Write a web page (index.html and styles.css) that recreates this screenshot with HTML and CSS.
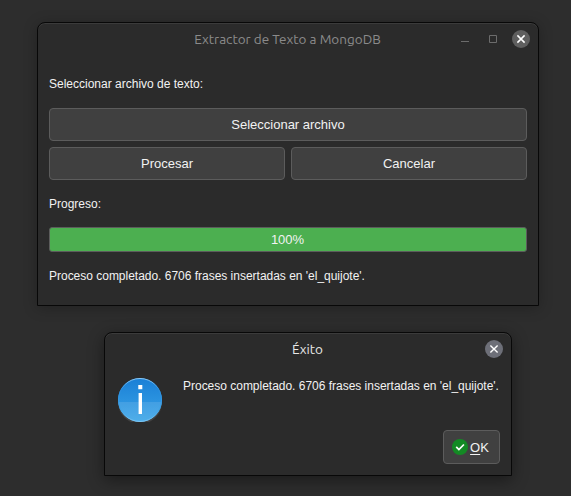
FILE: index.html
```html
<!DOCTYPE html>
<html lang="es">
<head>
<meta charset="utf-8">
<title>Extractor de Texto a MongoDB</title>
<link rel="stylesheet" href="styles.css">
</head>
<body>
<main class="window main-window">
  <header class="titlebar inactive">
    <h1 class="title main-title">Extractor de Texto a MongoDB</h1>
    <div class="controls">
      <svg class="ctl" viewBox="0 0 18 18"><path d="M5 11.5h8" stroke="#6c6c6c" fill="none"/></svg>
      <svg class="ctl" viewBox="0 0 18 18"><path d="M5.5 5.5h7v7h-7z" stroke="#6c6c6c" fill="none"/></svg>
      <svg class="ctl" viewBox="0 0 18 18"><circle cx="9" cy="9" r="9" fill="#5f5f5f"/><path d="M5.4 5.4l7.2 7.2M12.6 5.4l-7.2 7.2" stroke="#fff" stroke-width="1.5" fill="none"/></svg>
    </div>
  </header>
  <section class="content">
    <p class="label">Seleccionar archivo de texto:</p>
    <button class="btn">Seleccionar archivo</button>
    <div class="row">
      <button class="btn">Procesar</button>
      <button class="btn">Cancelar</button>
    </div>
    <p class="label">Progreso:</p>
    <div class="progress">100%</div>
    <p class="label status">Proceso completado. 6706 frases insertadas en 'el_quijote'.</p>
  </section>
</main>
<section class="window dialog">
  <header class="titlebar">
    <h2 class="title dialog-title">Éxito</h2>
    <div class="controls">
      <svg class="ctl" viewBox="0 0 18 18"><circle cx="9" cy="9" r="9" fill="#6d6f78"/><path d="M5.4 5.4l7.2 7.2M12.6 5.4l-7.2 7.2" stroke="#fff" stroke-width="1.4" fill="none"/></svg>
    </div>
  </header>
  <div class="message">
    <svg class="info" viewBox="0 0 44 44">
      <defs>
        <linearGradient id="blue" x1="0" y1="0" x2="0" y2="1"><stop offset="0" stop-color="#1a7fd6"/><stop offset="1" stop-color="#3aa5e8"/></linearGradient>
        <linearGradient id="rim" x1="0" y1="0" x2="0" y2="1"><stop offset="0" stop-color="#8cc8f2"/><stop offset=".25" stop-color="#2b8ddd"/><stop offset=".75" stop-color="#3fa3e6"/><stop offset="1" stop-color="#7cc6f4"/></linearGradient>
      </defs>
      <circle cx="22" cy="22" r="22" fill="url(#blue)"/>
      <path d="M0 24h44a22 22 0 0 1-44 0z" fill="#fff" fill-opacity=".11"/>
      <circle cx="22" cy="22" r="21.5" fill="none" stroke="url(#rim)"/>
      <path d="M20.3 7h4v4.3h-4zM20.6 15h3.4v21h-3.4z" fill="#fff"/>
    </svg>
    <p class="message-text status">Proceso completado. 6706 frases insertadas en 'el_quijote'.</p>
  </div>
  <footer class="actions">
    <button class="btn ok"><svg class="check" viewBox="0 0 16 16"><circle cx="8" cy="8" r="8" fill="#138a24"/><path d="M4.2 7.8l2.7 2.7 5-5" stroke="#fff" stroke-width="1.7" fill="none"/></svg><span><u>O</u>K</span></button>
  </footer>
</section>
</body>
</html>
```
FILE: styles.css
```css
* {
  box-sizing: border-box;
}

body {
  margin: 0;
  height: 496px;
  padding: 22px 0 0 37px;
  overflow: hidden;
  background: #2d2d2d;
  color: #f2f2f2;
  font-family: "Liberation Sans", Arial, sans-serif;
  font-size: 12px;
}

.window {
  display: flex;
  flex-direction: column;
  border: 1px solid #080808;
  border-radius: 8px 8px 0 0;
  background: #2b2b2b;
}

.main-window {
  width: 502px;
  height: 284px;
  box-shadow: inset 0 1px #3b3b3b, 0 2px 14px rgba(0, 0, 0, 0.25);
}

.dialog {
  width: 408px;
  height: 144px;
  margin: 26px 0 0 67px;
  box-shadow: inset 0 1px #3b3b3b, 0 4px 16px rgba(0, 0, 0, 0.42);
}

.titlebar {
  display: grid;
  grid-template-columns: 1fr auto 1fr;
  align-items: center;
  height: 32px;
  padding: 0 8px;
}

.title {
  grid-column: 2;
  margin: 0 1px 0 0;
  color: #e8e8e8;
  font: 400 13.5px/18px Ubuntu, "Noto Sans", sans-serif;
}

.inactive .title {
  color: #8b8b8b;
}

.controls {
  display: flex;
  justify-content: flex-end;
  gap: 10px;
}

.ctl {
  width: 18px;
  height: 18px;
}

.content {
  display: flex;
  flex-direction: column;
  padding: 17px 11px 0;
}

.label {
  margin: 0;
  height: 24px;
  line-height: 24px;
}

.status {
  letter-spacing: -0.015px;
}

.btn {
  display: flex;
  flex: 1;
  align-items: center;
  justify-content: center;
  min-height: 33px;
  padding: 0;
  border: 1px solid #5c5c5c;
  border-radius: 4px;
  background: #404040;
  color: #f2f2f2;
  font: 13px/15px "Liberation Sans", Arial, sans-serif;
}

.content > .btn {
  flex: none;
  margin-top: 12px;
}

.row {
  display: flex;
  gap: 6px;
  margin: 6px 0 12px;
}

.progress {
  height: 25px;
  margin: 11px 0 12px;
  padding-right: 1px;
  border: 1px solid #5c5c5c;
  border-radius: 3px;
  background: #4caf50;
  font-size: 13px;
  line-height: 24px;
  text-align: center;
}

.message {
  display: flex;
  gap: 21px;
  padding: 13px 0 0 13px;
}

.info {
  width: 44px;
  height: 44px;
}

.message-text {
  margin: 0;
  line-height: 16px;
}

.actions {
  display: flex;
  justify-content: flex-end;
  padding: 8px 11px 0 0;
}

.ok {
  flex: none;
  gap: 2px;
  width: 57px;
  height: 34px;
  padding-right: 2px;
}

.ok u {
  text-underline-offset: 2px;
}

.check {
  width: 16px;
  height: 16px;
}
```
